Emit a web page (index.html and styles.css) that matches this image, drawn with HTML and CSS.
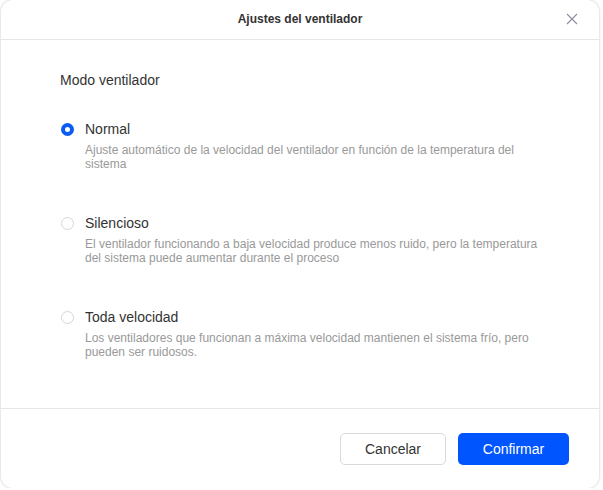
FILE: index.html
```html
<!DOCTYPE html>
<html lang="es">
<head>
<meta charset="utf-8">
<link rel="stylesheet" href="styles.css">
</head>
<body>
<div class="dialog">
  <div class="header">
    <span class="title">Ajustes del ventilador</span>
    <span class="close"><svg width="12" height="12" viewBox="0 0 12 12"><path d="M1 1L11 11M11 1L1 11" stroke="#8d8ca3" stroke-width="1.1" fill="none"/></svg></span>
  </div>
  <div class="content">
    <div class="section-title">Modo ventilador</div>
    <div class="options">
      <div class="option">
        <div class="label"><span class="radio checked"></span>Normal</div>
        <div class="desc">Ajuste automático de la velocidad del ventilador en función de la temperatura del sistema</div>
      </div>
      <div class="option">
        <div class="label"><span class="radio"></span>Silencioso</div>
        <div class="desc">El ventilador funcionando a baja velocidad produce menos ruido, pero la temperatura del sistema puede aumentar durante el proceso</div>
      </div>
      <div class="option">
        <div class="label"><span class="radio"></span>Toda velocidad</div>
        <div class="desc">Los ventiladores que funcionan a máxima velocidad mantienen el sistema frío, pero pueden ser ruidosos.</div>
      </div>
    </div>
  </div>
  <div class="footer">
    <button class="btn btn-cancel">Cancelar</button>
    <button class="btn btn-primary">Confirmar</button>
  </div>
</div>
</body>
</html>
```

FILE: styles.css
```css
html, body {
  margin: 0;
  padding: 0;
  background: #ffffff;
}
body {
  font-family: "Liberation Sans", Arial, sans-serif;
  color: #333;
}
.dialog {
  width: 598px;
  height: 488px;
  margin: 0 0 0 1px;
  background: #fff;
  border-radius: 12px;
  box-shadow: 0 0 2px 1px rgba(0,0,0,0.12);
  display: flex;
  flex-direction: column;
  box-sizing: border-box;
}
.header {
  height: 40px;
  border-bottom: 1px solid #e6e6e6;
  box-sizing: border-box;
  display: flex;
  align-items: center;
  justify-content: center;
  position: relative;
}
.title {
  font-size: 12px;
  font-weight: bold;
  color: #333;
  margin-top: -1px;
}
.close {
  position: absolute;
  right: 21px;
  top: 13px;
  width: 12px;
  height: 12px;
  display: flex;
}
.content {
  flex: 1;
  padding: 30px 57px 0 59px;
}
.section-title {
  font-size: 14px;
  line-height: 20px;
  color: #333;
}
.options {
  display: flex;
  flex-direction: column;
  gap: 42px;
  margin-top: 29px;
}
.label {
  display: flex;
  align-items: center;
  font-size: 14px;
  line-height: 20px;
  color: #333;
}
.radio {
  width: 13px;
  height: 13px;
  box-sizing: border-box;
  border: 1px solid #d6d6d6;
  border-radius: 50%;
  margin-right: 11px;
  margin-left: 1px;
}
.radio.checked {
  border: 4px solid #0a5cf5;
}
.desc {
  margin-top: 4px;
  padding-left: 25px;
  font-size: 12px;
  line-height: 14px;
  color: #999;
}
.footer {
  height: 80px;
  border-top: 1px solid #e6e6e6;
  box-sizing: border-box;
  display: flex;
  justify-content: flex-end;
  align-items: flex-start;
  gap: 12px;
  padding: 24px 30px 0 0;
}
.btn {
  height: 32px;
  border-radius: 5px;
  font-family: "Liberation Sans", Arial, sans-serif;
  font-size: 14px;
  box-sizing: border-box;
  cursor: pointer;
}
.btn-cancel {
  width: 106px;
  background: #fff;
  border: 1px solid #d9d9d9;
  color: #333;
}
.btn-primary {
  width: 111px;
  background: #0055ff;
  border: none;
  color: #fff;
}
```
